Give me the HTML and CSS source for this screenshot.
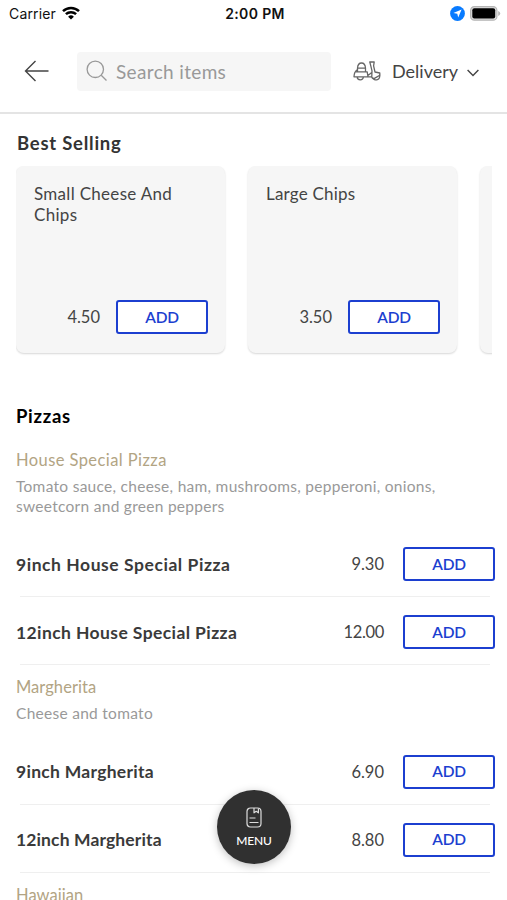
FILE: index.html
```html
<!DOCTYPE html>
<html lang="en">
<head>
<meta charset="utf-8">
<title>Menu</title>
<link rel="stylesheet" href="styles.css">
</head>
<body>
<div class="status">
  <div class="status-left"><span>Carrier</span>
    <svg width="18" height="14" viewBox="0 0 18 14" fill="none" stroke="#000" stroke-width="2.5"><path d="M1 5.2a11.6 11.6 0 0 1 16 0M3.900 8.200a7.400 7.400 0 0 1 10.200 0"/><path d="M9 13.600 6.100 10.700a4.200 4.200 0 0 1 5.800 0z" fill="#000" stroke="none"/></svg>
  </div>
  <div class="status-time">2:00 PM</div>
  <div class="status-right">
    <svg width="15" height="15" viewBox="0 0 15 15"><circle cx="7.5" cy="7.5" r="7.4" fill="#087bff"/><path d="M11.6 3.4 8.2 11.5 7.3 7.7 3.4 6.9z" fill="#fff"/></svg>
    <svg width="31" height="15" viewBox="0 0 31 15"><rect x=".6" y=".6" width="26.3" height="13.6" rx="3.8" fill="#ddd" stroke="#b5b5b5" stroke-width="1.2"/><rect x="2.3" y="2.3" width="22.9" height="10.2" rx="2" fill="#000"/><path d="M28.2 5v5q2-.8 2-2.5t-2-2.5z" fill="#b5b5b5"/></svg>
  </div>
</div>
<header class="header">
  <svg class="back" width="26" height="22" viewBox="0 0 26 22" fill="none" stroke="#444" stroke-width="1.4"><path d="M24.500 11H1.500M11.500 1 1.500 11l10 10"/></svg>
  <div class="search">
    <svg width="22" height="22" viewBox="0 0 22 22" fill="none" stroke="#999" stroke-width="1.3"><circle cx="9.300" cy="9.300" r="8.200"/><path d="m15.200 15.200 5.300 5.300"/></svg>
    <span>Search items</span>
  </div>
  <div class="mode">
    <svg class="scooter" width="28" height="20" viewBox="0 0 28 20" fill="none" stroke="#666" stroke-width="1.3" stroke-linejoin="round"><path d="M4.500 7.200Q4.800 2 8.500 2t4 5.200v3.600M4.500 7.200h8M4.500 7.200v3.600M4.500 8.500Q1 11 1 15.800h14l-.8-5H2.800M4.200 15.800a3.100 3.100 0 0 0 6.200 0M15 15.800h4.200M16.800 1h4.400l-.6 3.800 1.400 6.200 4.800 1v2.200l-5.800 3.400q-2.600-.2-2.200-2.600l.2-5.200-1.200-5zM15.200 14.200l3.600-2.700"/><path d="M19.500 16.500a3.600 3.600 0 1 0 7-2.700"/></svg>
    <span>Delivery</span>
    <svg class="chevron" width="12" height="8" viewBox="0 0 12 8" fill="none" stroke="#444" stroke-width="1.4"><path d="m.6 1 5.400 5.600L11.400 1"/></svg>
  </div>
</header>
<main class="content">
  <h2 class="heading best">Best Selling</h2>
  <div class="carousel">
    <article class="card"><p class="card-name">Small Cheese And Chips</p><div class="buy"><span class="price">4.50</span><button class="add">ADD</button></div></article>
    <article class="card"><p class="card-name large">Large Chips</p><div class="buy"><span class="price">3.50</span><button class="add">ADD</button></div></article>
    <article class="card"></article>
  </div>
  <h2 class="heading pizzas">Pizzas</h2>
  <section class="group">
    <h3 class="group-name">House Special Pizza</h3>
    <p class="desc">Tomato sauce, cheese, ham, mushrooms, pepperoni, onions, sweetcorn and green peppers</p>
    <div class="row"><span class="item">9inch House Special Pizza</span><span class="price">9.30</span><button class="add">ADD</button></div>
    <div class="row"><span class="item twelve">12inch House Special Pizza</span><span class="price wide">12.00</span><button class="add">ADD</button></div>
  </section>
  <section class="group">
    <h3 class="group-name short">Margherita</h3>
    <p class="desc">Cheese and tomato</p>
    <div class="row"><span class="item short">9inch Margherita</span><span class="price">6.90</span><button class="add">ADD</button></div>
    <div class="row"><span class="item short twelve">12inch Margherita</span><span class="price">8.80</span><button class="add">ADD</button></div>
  </section>
  <section class="group">
    <h3 class="group-name short">Hawaiian</h3>
  </section>
</main>
<button class="menu">
  <svg width="16" height="21" viewBox="0 0 16 21" fill="none" stroke="#ddd" stroke-width="1.2" stroke-linejoin="round"><rect x="1" y="1" width="14" height="19" rx="3.500"/><path d="M8 1v4.800l2.200-1.500 2.200 1.500V1.500M3.500 11h6M3.500 15.500h9"/></svg>
  <span>MENU</span>
</button>
</body>
</html>
```
FILE: styles.css
```css
* { box-sizing: border-box; }
body {
  margin: 0;
  height: 900px;
  overflow: hidden;
  position: relative;
  background: #fff;
  color: #444;
  font-family: Lato, "Liberation Sans", sans-serif;
}
h2, h3, p { margin: 0; }
button { font-family: inherit; padding: 0; }
svg { display: block; flex: none; }

.status {
  height: 28px;
  padding: 0 6px 0 9px;
  display: grid;
  grid-template-columns: 1fr auto 1fr;
  align-items: center;
  font: 14px/28px Inter, sans-serif;
  color: #111;
}
.status-left { display: flex; align-items: center; gap: 6px; letter-spacing: .15px; }
.status-left svg { margin-top: -3px; }
.status-time { font-weight: 600; letter-spacing: .35px; }
.status-right { display: flex; align-items: center; justify-content: flex-end; gap: 5px; margin-top: -2px; }

.header {
  height: 86px;
  border-bottom: 2px solid #e4e4e4;
  display: flex;
  align-items: center;
  padding: 2px 27px 0 24px;
}
.search {
  width: 254px;
  height: 39px;
  margin-left: 27px;
  padding-left: 9px;
  background: #f6f6f6;
  border-radius: 4px;
  display: flex;
  align-items: center;
  gap: 8px;
  color: #999;
  font-size: 19px;
  letter-spacing: .35px;
}
.mode { display: flex; align-items: center; margin-left: 22px; font-size: 18px; color: #444; }
.mode span { margin-left: 11px; }
.chevron { margin: 3px 0 0 9px; }

.content { padding: 0 12px 0 16px; }
.heading { line-height: 24px; font-weight: 700; }
.best { margin-top: 17px; color: #333; font-size: 18.500px; letter-spacing: .75px; padding-left: 1px; }
.pizzas { margin-top: 48px; color: #000; font-size: 18.500px; letter-spacing: .7px; }

.carousel { display: flex; gap: 23px; overflow: hidden; margin-top: 11px; width: 476px; padding-bottom: 3px; }
.card {
  flex: none;
  width: 209px;
  height: 187px;
  padding: 17px 17px 19px 18px;
  border-radius: 8px;
  background: #f6f6f6;
  box-shadow: 0 1px 2px rgba(0, 0, 0, .16);
  display: flex;
  flex-direction: column;
  justify-content: space-between;
}
.card-name { font-size: 17px; line-height: 21px; letter-spacing: .3px; }
.card-name.large { letter-spacing: .2px; }
.buy { display: flex; align-items: center; justify-content: flex-end; }
.price { font-size: 16.500px; margin-right: 16px; }
.price.wide { letter-spacing: -.35px; }
.row .price { margin-right: 19px; }
.add {
  width: 92px;
  height: 34px;
  border: 2px solid #1c3fd0;
  border-radius: 3px;
  background: #fff;
  color: #1c3fd0;
  font-size: 15.500px;
  font-weight: 600;
  letter-spacing: -.3px;
  padding-bottom: 1px;
}

.group { padding-top: 12px; }
.pizzas + .group { padding-top: 22px; }
.group-name { font-size: 16.500px; line-height: 21px; font-weight: 400; color: #b2a483; letter-spacing: .42px; }
.group-name.short { letter-spacing: .05px; }
.desc { font-size: 15.500px; line-height: 19.500px; color: #999; margin: 6px 0 13px; max-width: 440px; letter-spacing: .28px; }
.row {
  height: 68px;
  padding-top: 2px;
  display: flex;
  align-items: center;
  background: linear-gradient(#efefef, #efefef) 4px 100% / 470px 1px no-repeat;
}
.item { flex: 1; font-size: 17.500px; font-weight: 700; letter-spacing: .55px; color: #3a3a3a; }
.item.twelve { letter-spacing: .4px; }
.item.short { letter-spacing: .28px; }
.item.short.twelve { letter-spacing: .12px; }

.menu {
  position: absolute;
  left: 217px;
  top: 790px;
  width: 74px;
  height: 74px;
  border: 0;
  border-radius: 50%;
  background: #303030;
  color: #fff;
  box-shadow: 0 2px 8px rgba(0, 0, 0, .25);
  display: flex;
  flex-direction: column;
  align-items: center;
  gap: 6px;
  padding-top: 17px;
  font-size: 12px;
  line-height: 14px;
  letter-spacing: -.2px;
  font-weight: 500;
}
```
